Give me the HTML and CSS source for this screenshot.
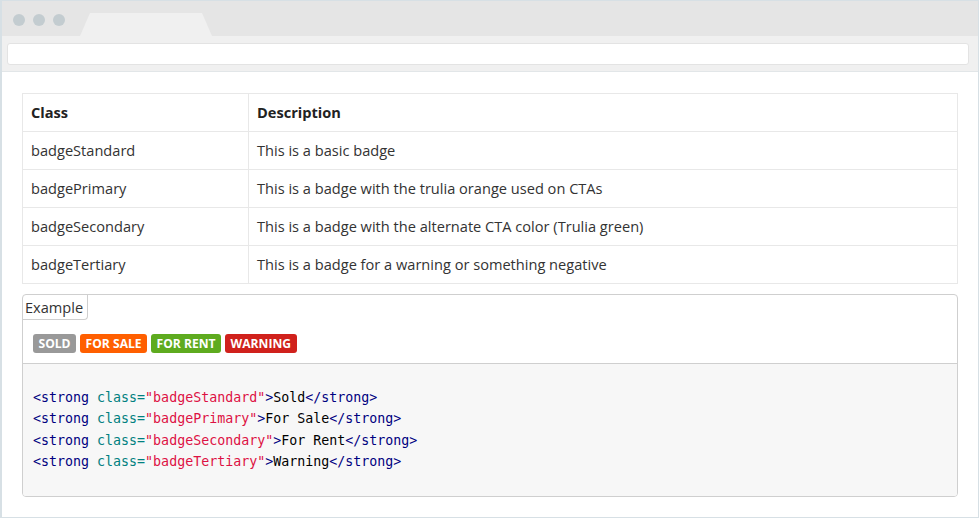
FILE: index.html
```html
<!DOCTYPE html>
<html>
<head>
<meta charset="utf-8">
<link rel="stylesheet" href="styles.css">
</head>
<body>
<div class="window">
  <div class="titlebar">
    <div class="dots"><span class="dot"></span><span class="dot"></span><span class="dot"></span></div>
    <div class="tab"></div>
  </div>
  <div class="toolbar"><div class="address"></div></div>
  <div class="content">
    <table class="docs">
      <thead>
        <tr><th class="c1">Class</th><th>Description</th></tr>
      </thead>
      <tbody>
        <tr><td class="c1">badgeStandard</td><td>This is a basic badge</td></tr>
        <tr><td class="c1">badgePrimary</td><td>This is a badge with the trulia orange used on CTAs</td></tr>
        <tr><td class="c1">badgeSecondary</td><td>This is a badge with the alternate CTA color (Trulia green)</td></tr>
        <tr><td class="c1">badgeTertiary</td><td>This is a badge for a warning or something negative</td></tr>
      </tbody>
    </table>
    <div class="example">
      <div class="label">Example</div>
      <div class="badges">
        <strong class="badge standard">Sold</strong>
        <strong class="badge primary">For Sale</strong>
        <strong class="badge secondary">For Rent</strong>
        <strong class="badge tertiary">Warning</strong>
      </div>
      <pre class="code"><span class="t">&lt;strong</span> <span class="a">class=</span><span class="s">"badgeStandard"</span><span class="t">&gt;</span>Sold<span class="t">&lt;/strong&gt;</span>
<span class="t">&lt;strong</span> <span class="a">class=</span><span class="s">"badgePrimary"</span><span class="t">&gt;</span>For Sale<span class="t">&lt;/strong&gt;</span>
<span class="t">&lt;strong</span> <span class="a">class=</span><span class="s">"badgeSecondary"</span><span class="t">&gt;</span>For Rent<span class="t">&lt;/strong&gt;</span>
<span class="t">&lt;strong</span> <span class="a">class=</span><span class="s">"badgeTertiary"</span><span class="t">&gt;</span>Warning<span class="t">&lt;/strong&gt;</span></pre>
    </div>
  </div>
</div>
</body>
</html>
```
FILE: styles.css
```css
html, body {
  margin: 0;
  padding: 0;
  background: #fff;
}
body {
  font-family: "Open Sans", "Liberation Sans", sans-serif;
  color: #333;
}
.window {
  width: 979px;
  height: 518px;
  box-sizing: border-box;
  border: 1px solid #d7e0e5;
  border-left-width: 2px;
  display: flex;
  flex-direction: column;
  overflow: hidden;
}
.titlebar {
  height: 35px;
  background: #e5e5e5;
  display: flex;
  align-items: flex-end;
}
.dots {
  display: flex;
  gap: 8px;
  padding-left: 11px;
  align-self: center;
  margin-top: 2px;
}
.dot {
  width: 12px;
  height: 12px;
  border-radius: 50%;
  background: #c3ccd0;
}
.tab {
  margin-left: 15px;
  width: 132px;
  height: 23px;
  background: #f0f0f0;
  clip-path: polygon(0 100%, 10px 0, 122px 0, 132px 100%);
}
.toolbar {
  height: 36px;
  box-sizing: border-box;
  background: #f0f0f0;
  border-bottom: 1px solid #e2e6e8;
  padding: 7px 9px 0 5px;
}
.address {
  height: 22px;
  box-sizing: border-box;
  background: #fff;
  border: 1px solid #e3e3e3;
  border-radius: 3px;
}
.content {
  padding: 21px 20px 0 20px;
}
.docs {
  width: 936px;
  border-collapse: collapse;
  border: 1px solid #e8e8e8;
  font-size: 14.6px;
  line-height: 21px;
}
.docs th, .docs td {
  border: 1px solid #e8e8e8;
  padding: 8px 8px;
  text-align: left;
  color: #333;
}
.docs th {
  font-weight: 700;
  color: #222;
}
.docs .c1 {
  width: 209px;
}
.example {
  margin-top: 10px;
  width: 936px;
  box-sizing: border-box;
  border: 1px solid #cfcfcf;
  border-radius: 4px;
  overflow: hidden;
}
.label {
  display: inline-block;
  font-size: 14.6px;
  line-height: 24px;
  padding: 0 4px 0 2px;
  color: #333;
  border-right: 1px solid #cfcfcf;
  border-bottom: 1px solid #cfcfcf;
  border-bottom-right-radius: 4px;
}
.badges {
  display: flex;
  gap: 4px;
  padding: 14px 10px 10px 10px;
  border-bottom: 1px solid #cfcfcf;
}
.badge {
  display: inline-block;
  color: #fff;
  font-size: 12.1px;
  font-weight: 700;
  text-transform: uppercase;
  line-height: 19px;
  height: 19px;
  padding: 0 5.5px;
  border-radius: 3px;
}
.standard { background: #999999; }
.primary { background: #ff5f00; }
.secondary { background: #5eab1f; }
.tertiary { background: #d0211c; }
.code {
  margin: 0;
  background: #f7f7f7;
  padding: 23px 10px 24px 10px;
  font-family: "DejaVu Sans Mono", "Liberation Mono", monospace;
  font-size: 13.3px;
  line-height: 21.3px;
  color: #000;
}
.code .t { color: #000080; }
.code .a { color: #008080; }
.code .s { color: #dd1144; }
```
